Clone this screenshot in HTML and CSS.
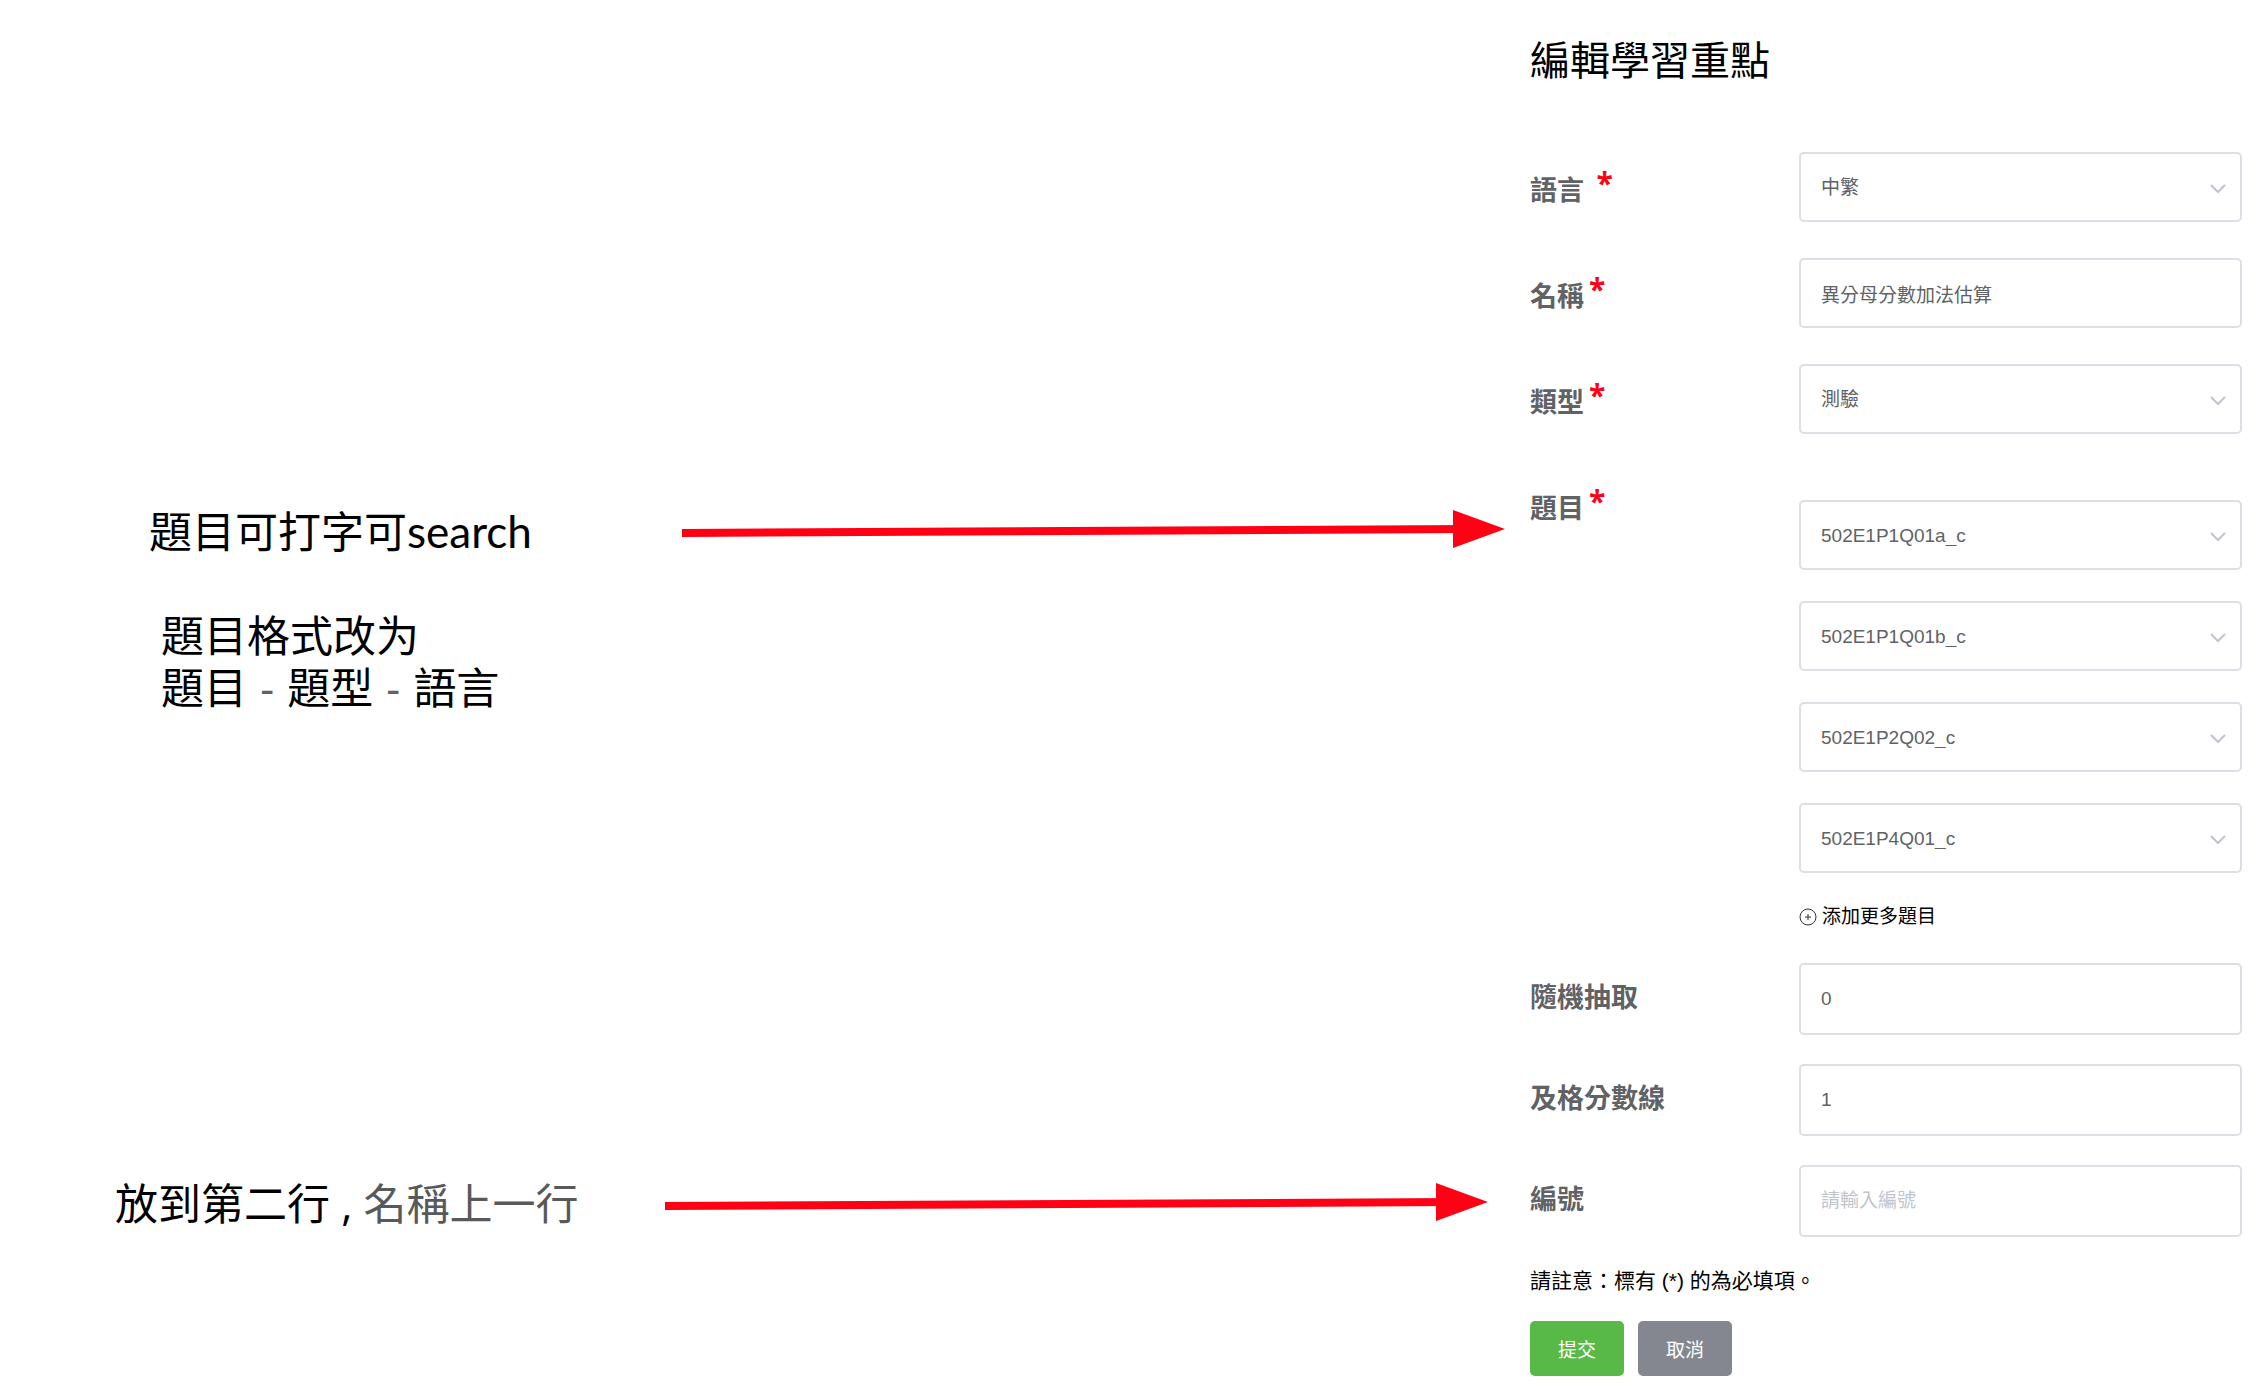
FILE: index.html
```html
<!DOCTYPE html>
<html lang="zh-Hant">
<head>
    <meta charset="UTF-8">
    <meta name="viewport" content="width=device-width, initial-scale=1.0">
    <title>編輯學習重點</title>
    <link rel="stylesheet" href="styles.css">
</head>
<body>
<div class="page">

    <!-- Review notes with arrows to the form -->
    <aside class="notes">
        <div class="note-row">
            <p class="note">題目可打字可<span class="latin">search</span></p>
            <svg class="arrow" aria-hidden="true">
                <line x1="0" y1="24" x2="96%" y2="20" />
                <svg x="100%" y="20" overflow="visible"><polygon points="-52,-19 0,0 -52,19" /></svg>
            </svg>
        </div>
        <p class="note note-format">題目格式改为<br>題目<span class="dash"> - </span>題型<span class="dash"> - </span>語言</p>
        <div class="note-row note-row-last">
            <p class="note">放到第二行<span class="comma"> , </span><span class="grey">名稱上一行</span></p>
            <svg class="arrow" aria-hidden="true">
                <line x1="0" y1="24" x2="96%" y2="20" />
                <svg x="100%" y="20" overflow="visible"><polygon points="-52,-19 0,0 -52,19" /></svg>
            </svg>
        </div>
    </aside>

    <form class="edit-form" onsubmit="return false">
        <h1>編輯學習重點</h1>

        <div class="row">
            <label for="language">語言 <span class="star">*</span></label>
            <div class="select">
                <select id="language"><option>中繁</option></select>
                <svg class="chevron" viewBox="0 0 16 10"><path d="M1 1l7 7 7-7" /></svg>
            </div>
        </div>
        <div class="row">
            <label for="name">名稱<span class="star">*</span></label>
            <input type="text" id="name" value="異分母分數加法估算">
        </div>
        <div class="row">
            <label for="type">類型<span class="star">*</span></label>
            <div class="select">
                <select id="type"><option>測驗</option></select>
                <svg class="chevron" viewBox="0 0 16 10"><path d="M1 1l7 7 7-7" /></svg>
            </div>
        </div>

        <div class="row row-questions">
            <label for="question1">題目<span class="star">*</span></label>
            <div class="questions">
                <div class="select">
                    <select id="question1"><option>502E1P1Q01a_c</option></select>
                    <svg class="chevron" viewBox="0 0 16 10"><path d="M1 1l7 7 7-7" /></svg>
                </div>
                <div class="select">
                    <select aria-label="題目 2"><option>502E1P1Q01b_c</option></select>
                    <svg class="chevron" viewBox="0 0 16 10"><path d="M1 1l7 7 7-7" /></svg>
                </div>
                <div class="select">
                    <select aria-label="題目 3"><option>502E1P2Q02_c</option></select>
                    <svg class="chevron" viewBox="0 0 16 10"><path d="M1 1l7 7 7-7" /></svg>
                </div>
                <div class="select">
                    <select aria-label="題目 4"><option>502E1P4Q01_c</option></select>
                    <svg class="chevron" viewBox="0 0 16 10"><path d="M1 1l7 7 7-7" /></svg>
                </div>
                <button type="button" class="add">
                    <svg viewBox="0 0 18 18"><circle cx="9" cy="9" r="8" /><path d="M9 6v6M6 9h6" /></svg>
                    添加更多題目
                </button>
            </div>
        </div>

        <div class="row row-plain">
            <label for="random">隨機抽取</label>
            <input type="text" id="random" value="0">
        </div>
        <div class="row row-plain">
            <label for="pass">及格分數線</label>
            <input type="text" id="pass" value="1">
        </div>
        <div class="row row-plain">
            <label for="code">編號</label>
            <input type="text" id="code" placeholder="請輸入編號">
        </div>

        <p class="hint">請註意：標有 (*) 的為必填項。</p>
        <div class="buttons">
            <button type="submit" class="btn btn-submit">提交</button>
            <button type="button" class="btn btn-cancel">取消</button>
        </div>
    </form>

</div>
</body>
</html>
```

FILE: styles.css
```css
* {
    box-sizing: border-box;
}

body {
    margin: 0;
    background: #fff;
    color: #000;
    font-family: "Liberation Sans", "Noto Sans CJK TC", sans-serif;
}

h1, p {
    margin: 0;
    font-weight: normal;
}

.page {
    display: flex;
}

/* Notes */
.notes {
    flex: 1;
    padding-top: 505px;
}

.note-row {
    display: grid;
    grid-template-columns: 533px 1fr;
    padding: 0 25px 0 149px;
}

.note {
    font-family: Lato, "Noto Sans CJK TC", sans-serif;
    font-size: 43px;
    line-height: 52px;
    white-space: nowrap;
}

.latin {
    font-size: 44px;
}

.note-format {
    margin-top: 52px;
    padding-left: 161px;
}

.note-row-last {
    grid-template-columns: 550px 1fr;
    margin-top: 464px;
    padding: 0 42px 0 115px;
}

.dash, .comma {
    font-family: "Open Sans", sans-serif;
}

.dash {
    color: #606266;
    margin: 0 2px;
}

.grey {
    color: #58595b;
}

.arrow {
    display: block;
    width: 100%;
    height: 48px;
    margin-top: 4px;
    overflow: visible;
    fill: #ff0015;
}

.arrow line {
    stroke: #ff0015;
    stroke-width: 8;
}

/* Form */
.edit-form {
    width: 734px;
    padding: 31px 22px 22px 0;
}

h1 {
    font-size: 40px;
    line-height: 60px;
    margin-bottom: 61px;
}

.row {
    display: grid;
    grid-template-columns: 269px 1fr;
    margin-bottom: 36px;
}

.row label {
    color: #606266;
    font-size: 27px;
    font-weight: 700;
    line-height: 78px;
    height: 70px;
}

.star {
    position: relative;
    top: -6px;
    color: #ff0015;
    font-family: "Open Sans", sans-serif;
    font-size: 30px;
    line-height: 30px;
    margin-left: 5px;
}

.select {
    position: relative;
}

select, input {
    display: block;
    width: 100%;
    height: 70px;
    padding: 0 20px;
    border: 2px solid #dcdfe6;
    border-radius: 5px;
    background: #fff;
    color: #606266;
    font-family: inherit;
    font-size: 19px;
    appearance: none;
}

input::placeholder {
    color: #c0c4cc;
    opacity: 1;
}

.chevron {
    position: absolute;
    right: 16px;
    top: 32px;
    width: 16px;
    height: 10px;
    fill: none;
    stroke: #c0c4cc;
    stroke-width: 2;
    pointer-events: none;
}

.row-questions {
    margin-bottom: 33px;
}

.questions {
    display: grid;
    gap: 31px;
    padding-top: 30px;
}

.add {
    display: flex;
    align-items: center;
    gap: 5px;
    padding: 0;
    border: none;
    background: none;
    color: #000;
    font-family: inherit;
    font-size: 19px;
    line-height: 26px;
}

.add svg {
    width: 18px;
    height: 18px;
    fill: none;
    stroke: #303133;
}

.row-plain {
    margin-bottom: 29px;
}

.row-plain label {
    line-height: 70px;
}

.row-plain input {
    height: 72px;
}

.hint {
    font-family: "Liberation Sans", "Noto Sans CJK JP", sans-serif;
    font-size: 21px;
    line-height: 30px;
    margin-bottom: 25px;
}

.buttons {
    display: flex;
    gap: 14px;
}

.btn {
    height: 55px;
    padding: 0 28px;
    border: none;
    border-radius: 5px;
    color: #fff;
    font-family: inherit;
    font-size: 19px;
}

.btn-submit {
    background: #58b947;
}

.btn-cancel {
    background: #84878f;
}
```
